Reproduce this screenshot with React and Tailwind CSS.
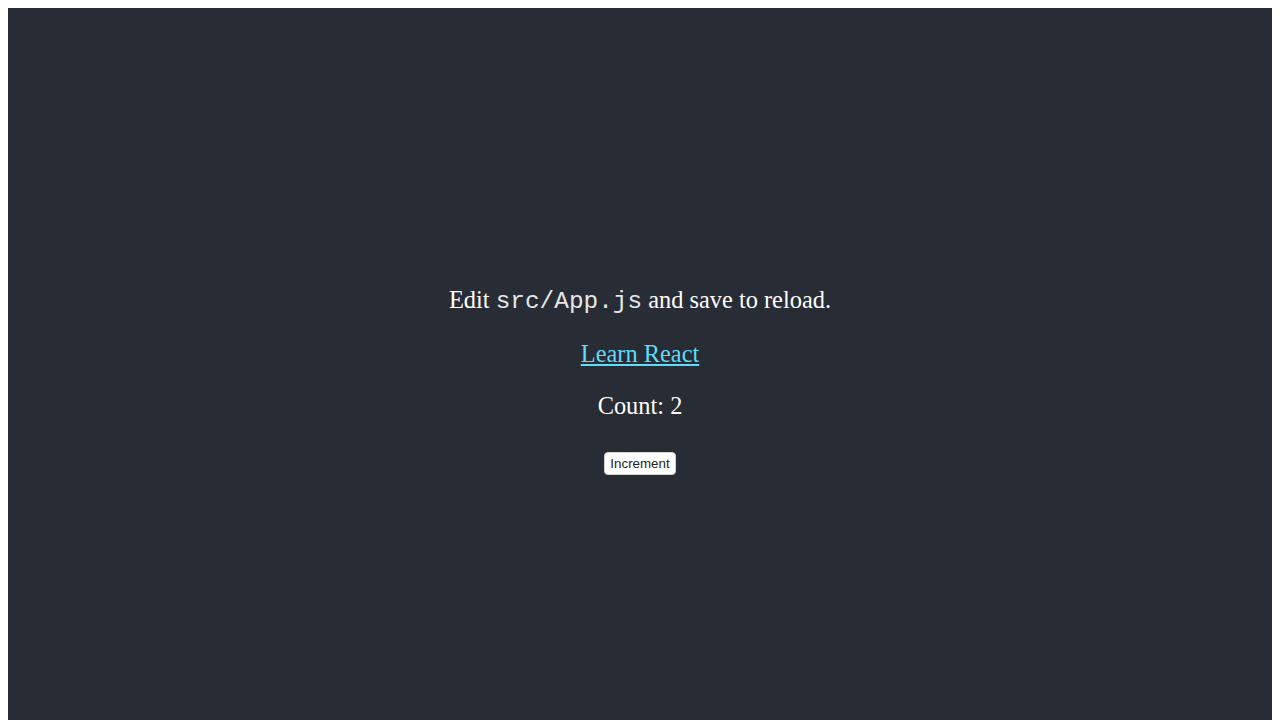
export default function App() {
  return (
    <div className="bg-white p-2">
      <div className="bg-[#282c34] min-h-screen flex flex-col items-center justify-center text-[24.4px] text-white font-['Liberation_Serif',serif]">
        <p className="my-[24.4px] leading-[28px]">
          Edit <code className="font-['Liberation_Mono',monospace] text-[#e6e6e6]">src/App.js</code> and save to reload.
        </p>
        <a href="#" className="text-[#61dafb] underline leading-[28px]">
          Learn React
        </a>
        <p className="my-[24.4px] leading-[28px]">Count: 2</p>
        <button
          type="button"
          className="mt-[7px] bg-white text-[#222] text-[13.33px] leading-[15px] font-['Liberation_Sans',Arial,sans-serif] px-[5.5px] py-[3px] border border-[#d4d4d4] rounded-[4px]"
        >
          Increment
        </button>
      </div>
    </div>
  )
}
